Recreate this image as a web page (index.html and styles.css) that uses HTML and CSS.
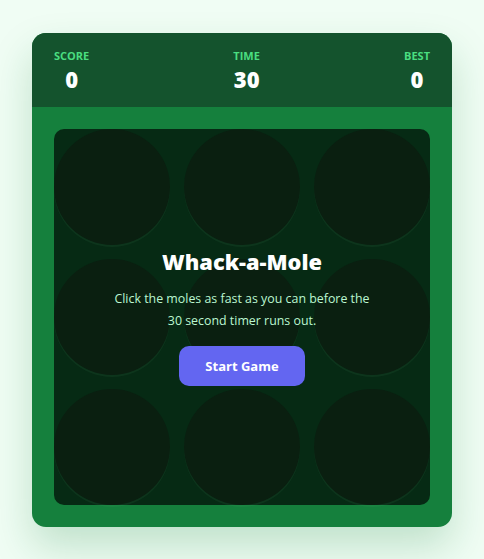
FILE: index.html
```html
<!DOCTYPE html>
<html lang="en">
<head>
<meta charset="utf-8">
<title>Whack-a-Mole</title>
<link rel="stylesheet" href="styles.css">
</head>
<body>
<div class="card">
  <div class="header">
    <div class="stat"><div class="label">Score</div><div class="value">0</div></div>
    <div class="stat"><div class="label">Time</div><div class="value">30</div></div>
    <div class="stat"><div class="label">Best</div><div class="value">0</div></div>
  </div>
  <div class="body">
    <div class="board">
      <div class="hole"></div><div class="hole"></div><div class="hole"></div>
      <div class="hole"></div><div class="hole"></div><div class="hole"></div>
      <div class="hole"></div><div class="hole"></div><div class="hole"></div>
      <div class="overlay">
        <h1 class="title">Whack-a-Mole</h1>
        <p class="desc">Click the moles as fast as you can before the<br>30 second timer runs out.</p>
        <button class="start">Start Game</button>
      </div>
    </div>
  </div>
</div>
</body>
</html>
```
FILE: styles.css
```css
html, body { margin: 0; padding: 0; }
body {
  background: #f0fdf4;
  font-family: "Open Sans", "Noto Sans", sans-serif;
  min-height: 100vh;
  display: flex;
  align-items: center;
  justify-content: center;
}
.card {
  width: 420px;
  height: 494px;
  border-radius: 14px;
  background: #15803d;
  overflow: hidden;
  box-shadow: 0 20px 40px rgba(21, 128, 61, 0.22);
  display: flex;
  flex-direction: column;
}
.header {
  height: 75px;
  box-sizing: border-box;
  background: #14532d;
  padding: 16px 22px 0;
  display: flex;
  justify-content: space-between;
}
.stat { text-align: center; }
.label {
  color: #4ade80;
  font-size: 11px;
  font-weight: 700;
  text-transform: uppercase;
  line-height: 14px;
}
.value {
  color: #ffffff;
  font-size: 22px;
  font-weight: 800;
  line-height: 30px;
  margin-top: 1px;
}
.body { padding: 22px; }
.board {
  position: relative;
  width: 376px;
  height: 376px;
  border-radius: 10px;
  background: #062a14;
  display: grid;
  grid-template-columns: repeat(3, 116px);
  grid-template-rows: repeat(3, 116px);
  gap: 14px;
}
.hole {
  border-radius: 50%;
  background: #0a1f10;
  box-shadow: 0 2px 0 rgba(120, 200, 140, 0.07);
}
.overlay {
  position: absolute;
  inset: 0;
  display: flex;
  flex-direction: column;
  align-items: center;
  justify-content: center;
  text-align: center;
}
.title {
  margin: 0;
  color: #ffffff;
  font-size: 21.8px;
  font-weight: 800;
  line-height: 30px;
}
.desc {
  margin: 11px 0 14px;
  color: #bbf7d0;
  font-size: 12.4px;
  line-height: 22px;
}
.start {
  width: 126px;
  height: 40px;
  border: none;
  border-radius: 10px;
  background: #6366f1;
  color: #ffffff;
  font-family: inherit;
  font-size: 13px;
  font-weight: 700;
}
```
